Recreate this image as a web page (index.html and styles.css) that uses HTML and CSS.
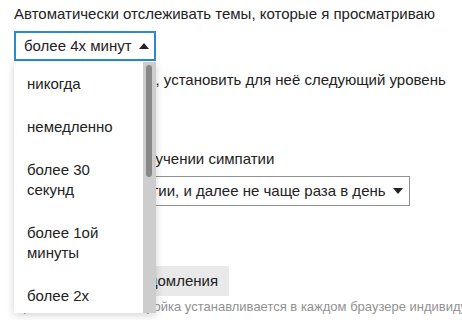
FILE: index.html
```html
<!DOCTYPE html>
<html lang="ru">
<head>
  <meta charset="UTF-8">
  <title>Настройки уведомлений</title>
  <link rel="stylesheet" href="styles.css">
</head>
<body>

  <div class="prefs">
    <div class="control-group">
      <label class="control-label">Автоматически отслеживать темы, которые я просматриваю</label>
      <div class="select-kit is-expanded">
        <div class="select-kit-header">
          <span class="selected-name">более 4х минут</span>
          <svg class="caret" width="10" height="6" viewBox="0 0 10 6"><polygon points="0,6 10,6 5,0" fill="#222"/></svg>
        </div>
        <div class="select-kit-body">
          <ul class="select-kit-collection">
            <li class="select-kit-row">никогда</li>
            <li class="select-kit-row">немедленно</li>
            <li class="select-kit-row">более 30 секунд</li>
            <li class="select-kit-row">более 1ой минуты</li>
            <li class="select-kit-row">более 2х минут</li>
            <li class="select-kit-row">более 3х минут</li>
            <li class="select-kit-row">более 4х минут</li>
          </ul>
          <div class="scrollbar"><div class="scrollbar-thumb"></div></div>
        </div>
      </div>
    </div>

    <div class="control-group">
      <label class="control-label">Когда я пишу в теме, установить для неё следующий уровень</label>
      <div class="select-kit">
        <div class="select-kit-header">
          <span class="selected-name">Следить</span>
          <svg class="caret" width="10" height="6" viewBox="0 0 10 6"><polygon points="0,0 10,0 5,6" fill="#222"/></svg>
        </div>
      </div>
    </div>

    <div class="control-group likes">
      <label class="control-label">Уведомлять при получении симпатии</label>
      <div class="select-kit">
        <div class="select-kit-header">
          <span class="selected-name">При первой симпатии, и далее не чаще раза в день</span>
          <svg class="caret" width="10" height="6" viewBox="0 0 10 6"><polygon points="0,0 10,0 5,6" fill="#222"/></svg>
        </div>
      </div>
    </div>

    <div class="control-group desktop">
      <label class="control-label">Оповещения</label>
      <button class="btn">
        <svg class="btn-icon" width="16" height="16" viewBox="0 0 16 16"><path d="M8 1.5c-2.6 0-4.3 2-4.3 4.5v3.2L2.3 11.5h11.4l-1.4-2.3V6c0-2.5-1.7-4.5-4.3-4.5zM6.3 13a1.7 1.7 0 0 0 3.4 0z" fill="none" stroke="#222" stroke-width="1.4"/></svg>
        <span>Включить уведомления</span>
      </button>
      <div class="instructions">Примечание: эта настройка устанавливается в каждом браузере индивидуально.</div>
    </div>
  </div>

</body>
</html>
```

FILE: styles.css
```css
body {
  margin: 0;
  font-family: "Liberation Sans", Arial, sans-serif;
  font-size: 15px;
  line-height: 20px;
  color: #222;
  background: #fff;
}
.prefs {
  padding: 4px 14px 0;
}
.control-group {
  margin-bottom: 9px;
}
.control-group.likes {
  margin-top: 22px;
}
.control-group.desktop {
  margin-top: 33px;
}
.control-label {
  display: block;
  white-space: nowrap;
  margin-bottom: 7px;
}
.select-kit {
  position: relative;
  display: inline-block;
}
.select-kit-header {
  display: flex;
  align-items: center;
  gap: 7px;
  height: 30px;
  box-sizing: border-box;
  padding: 0 6px 0 9px;
  border: 1px solid #919191;
  background: #fff;
  white-space: nowrap;
}
.is-expanded .select-kit-header {
  width: 142px;
  border: 2px solid #2d8ac9;
  padding: 0 5px 0 8px;
  justify-content: space-between;
}
.select-kit-body {
  position: absolute;
  top: 31px;
  left: 0;
  z-index: 10;
  display: flex;
  width: 142px;
  height: 251px;
  background: #fff;
  box-shadow: 0 2px 8px rgba(0, 0, 0, 0.18);
}
.select-kit-collection {
  flex: 1;
  list-style: none;
  margin: 0;
  padding: 0;
  overflow: hidden;
}
.select-kit-row {
  padding: 11.5px 20px 11.5px 13px;
}
.scrollbar {
  width: 13px;
  background: #cdcdcd;
  padding: 3px 0 0 3px;
  box-sizing: border-box;
}
.scrollbar-thumb {
  width: 6px;
  height: 112px;
  border-radius: 3px;
  background: #888;
}
.btn {
  display: inline-flex;
  align-items: center;
  gap: 9px;
  font: inherit;
  color: #222;
  background: #e9e9e9;
  border: none;
  height: 30px;
  padding: 0 11px 0 15px;
}
.instructions {
  font-size: 13px;
  line-height: 18px;
  color: #919191;
  white-space: nowrap;
  margin-top: 2px;
}
```
